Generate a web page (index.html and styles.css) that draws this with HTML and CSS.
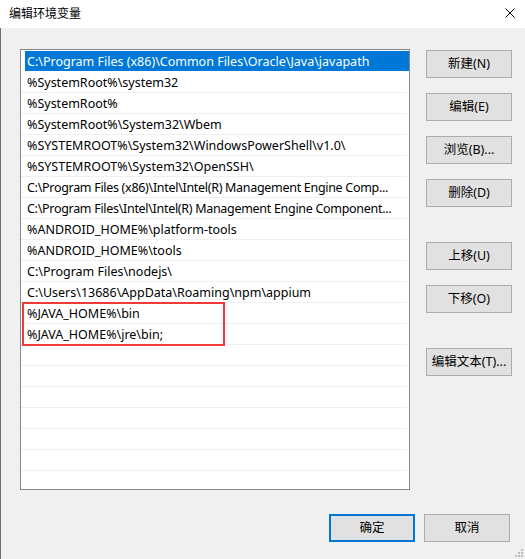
FILE: index.html
```html
<!DOCTYPE html>
<html lang="zh-CN">
<head>
<meta charset="utf-8">
<title>编辑环境变量</title>
<link rel="stylesheet" href="styles.css">
</head>
<body>
<div class="dialog">
  <div class="titlebar">
    <span class="title">编辑环境变量</span>
    <svg class="close" width="10" height="10" viewBox="0 0 10 10"><path d="M0.5 0.5 L9.5 9.5 M9.5 0.5 L0.5 9.5" stroke="#000" stroke-width="1" fill="none"/></svg>
  </div>
  <div class="content">
    <div class="main">
      <div class="list">
        <div class="row sel">C:\Program Files (x86)\Common Files\Oracle\Java\javapath</div>
        <div class="row">%SystemRoot%\system32</div>
        <div class="row">%SystemRoot%</div>
        <div class="row">%SystemRoot%\System32\Wbem</div>
        <div class="row">%SYSTEMROOT%\System32\WindowsPowerShell\v1.0\</div>
        <div class="row">%SYSTEMROOT%\System32\OpenSSH\</div>
        <div class="row fit">C:\Program Files (x86)\Intel\Intel(R) Management Engine Comp...</div>
        <div class="row fit">C:\Program Files\Intel\Intel(R) Management Engine Component...</div>
        <div class="row">%ANDROID_HOME%\platform-tools</div>
        <div class="row">%ANDROID_HOME%\tools</div>
        <div class="row">C:\Program Files\nodejs\</div>
        <div class="row">C:\Users\13686\AppData\Roaming\npm\appium</div>
        <div class="row">%JAVA_HOME%\bin</div>
        <div class="row">%JAVA_HOME%\jre\bin;</div>
        <div class="row"></div>
        <div class="row"></div>
        <div class="row"></div>
        <div class="row"></div>
        <div class="row"></div>
        <div class="row"></div>
        <div class="row"></div>
        <div class="highlight"></div>
      </div>
      <div class="side">
        <button class="btn">新建(N)</button>
        <button class="btn">编辑(E)</button>
        <button class="btn">浏览(B)...</button>
        <button class="btn">删除(D)</button>
        <button class="btn spaced">上移(U)</button>
        <button class="btn">下移(O)</button>
        <button class="btn spaced">编辑文本(T)...</button>
      </div>
    </div>
    <div class="footer">
      <button class="btn primary">确定</button>
      <button class="btn">取消</button>
    </div>
    <svg class="grip" width="10" height="10" viewBox="0 0 10 10">
      <rect x="7" y="1" width="2" height="2" fill="#bcbcbc"/>
      <rect x="4" y="4" width="2" height="2" fill="#bcbcbc"/>
      <rect x="7" y="4" width="2" height="2" fill="#bcbcbc"/>
      <rect x="1" y="7" width="2" height="2" fill="#bcbcbc"/>
      <rect x="4" y="7" width="2" height="2" fill="#bcbcbc"/>
      <rect x="7" y="7" width="2" height="2" fill="#bcbcbc"/>
    </svg>
  </div>
</div>
</body>
</html>
```
FILE: styles.css
```css
* { box-sizing: border-box; }
html, body {
  margin: 0;
  padding: 0;
  width: 525px;
  height: 559px;
  overflow: hidden;
  background: #f0f0f0;
}
body {
  font-family: "Noto Sans", "Noto Sans CJK SC", sans-serif;
  font-size: 12.5px;
  color: #000;
}
.dialog {
  width: 525px;
  height: 559px;
  display: flex;
  flex-direction: column;
}
.titlebar {
  height: 28px;
  background: #fff;
  display: flex;
  align-items: center;
  justify-content: space-between;
  padding: 0 10px 2px 9px;
}
.title {
  font-family: "Noto Sans CJK SC", sans-serif;
  font-size: 12px;
  line-height: 16px;
}
.close { display: block; }
.content {
  flex: 1;
  position: relative;
  border-left: 1px solid #6f6f6f;
  padding: 21px 0 0 19px;
  display: flex;
  flex-direction: column;
}
.main {
  display: flex;
  gap: 16px;
  align-items: flex-start;
}
.list {
  position: relative;
  width: 390px;
  height: 441px;
  border: 1px solid #828790;
  background: #fff;
  padding-top: 1px;
  overflow: hidden;
}
.row {
  height: 21px;
  line-height: 21px;
  padding-left: 6px;
  white-space: nowrap;
  overflow: hidden;
  border-bottom: 1px solid #f0f0f0;
  margin-right: 2px;
}
.row.fit { letter-spacing: -0.3px; }
.row.sel {
  background: #0078d7;
  color: #fff;
  border-left: 4px solid #fff;
  padding-left: 2px;
  margin-right: 0;
  border-bottom-color: #fff;
}
.highlight {
  position: absolute;
  left: 1px;
  top: 252px;
  width: 203px;
  height: 44px;
  border: 2px solid #f03a3a;
}
.side {
  display: flex;
  flex-direction: column;
  gap: 15px;
  padding-top: 1px;
}
.btn {
  width: 86px;
  height: 28px;
  background: #e1e1e1;
  border: 1px solid #adadad;
  font-family: "Noto Sans", "Noto Sans CJK SC", sans-serif;
  font-size: 12.5px;
  color: #000;
  padding: 0;
  margin: 0;
  line-height: 16px;
}
.side .btn.spaced { margin-top: 20px; }
.footer {
  display: flex;
  justify-content: flex-end;
  gap: 9px;
  padding: 24px 15px 0 0;
}
.footer .btn { width: 86px; }
.btn.primary { border: 2px solid #0078d7; }
.grip {
  position: absolute;
  right: 1px;
  bottom: 1px;
}
```
